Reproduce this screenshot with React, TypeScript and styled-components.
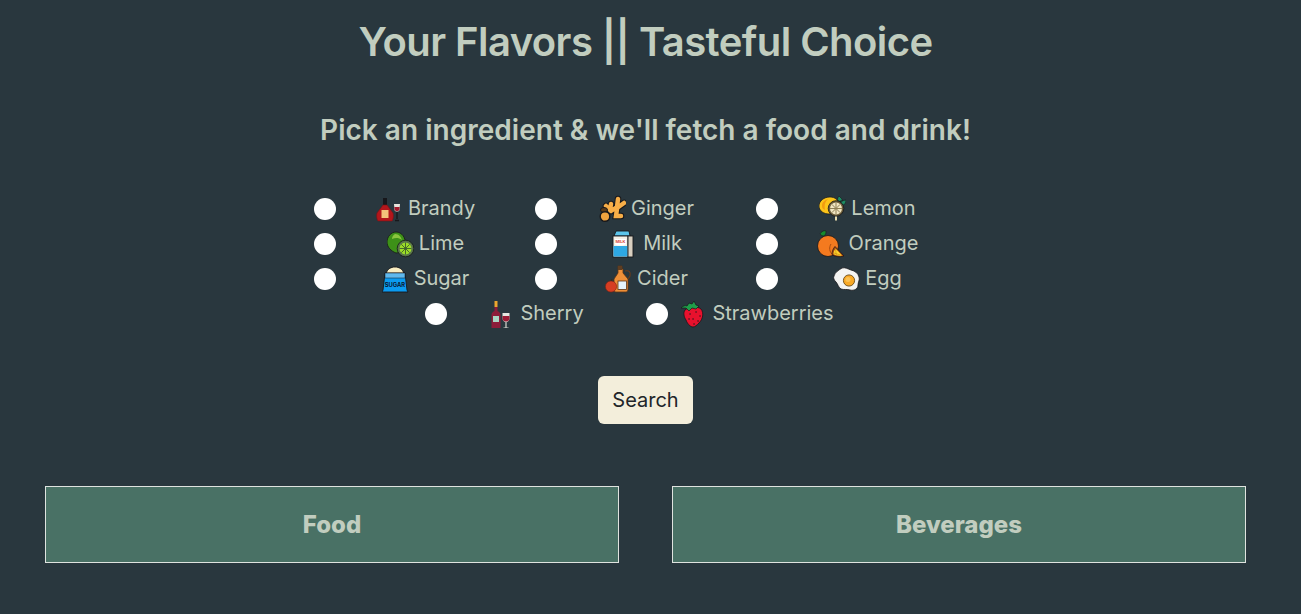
import React from 'react';
import styled, { createGlobalStyle } from 'styled-components';

const GlobalStyle = createGlobalStyle`
  html, body {
    margin: 0;
    background: #29373e;
  }
  body {
    font-family: Inter, "Liberation Sans", sans-serif;
    color: #c1cdbf;
  }
`;

const SPage = styled.main`
  box-sizing: border-box;
  width: 1301px;
  height: 614px;
  padding: 18px 10px 0 0;
  overflow: hidden;
`;

const STitle = styled.h1`
  margin: 0;
  font-size: 40px;
  line-height: 48px;
  font-weight: 600;
  letter-spacing: -0.57px;
  text-align: center;
`;

const SSubtitle = styled.h2`
  margin: 47px 0 0;
  font-size: 28px;
  line-height: 34px;
  font-weight: 600;
  letter-spacing: 0.02px;
  text-align: center;
`;

const SForm = styled.form`
  display: flex;
  flex-direction: column;
  align-items: center;
  margin-top: 44px;
`;

const SOptions = styled.div`
  display: flex;
  flex-wrap: wrap;
  justify-content: center;
  width: 663px;
`;

const SOption = styled.label`
  display: flex;
  align-items: center;
  width: 221px;
  height: 35px;
`;

const SRadio = styled.input`
  appearance: none;
  flex: none;
  width: 22px;
  height: 22px;
  margin: 0 14px 0 0;
  border-radius: 50%;
  background: #fff;
`;

const SLabel = styled.span`
  display: flex;
  align-items: center;
  justify-content: center;
  gap: 5px;
  width: 151px;
  font-size: 20px;
  line-height: 27px;
  white-space: nowrap;
`;

const SIcon = styled.svg`
  flex: none;
  width: 27px;
  height: 28px;
`;

const SButton = styled.button`
  width: 95px;
  height: 48px;
  margin-top: 45px;
  padding: 0;
  border: 0;
  border-radius: 6px;
  background: #f3eedb;
  color: #212529;
  font: 400 20px Inter, "Liberation Sans", sans-serif;
`;

const SCards = styled.section`
  display: flex;
  gap: 53px;
  margin: 62px 0 0 45px;
`;

const SCard = styled.div`
  box-sizing: border-box;
  display: flex;
  align-items: center;
  justify-content: center;
  width: 574px;
  height: 77px;
  border: 1px solid #dfe3df;
  background: #497165;
  font-size: 24px;
  font-weight: 800;
`;

const line = '#17171b';

const icons: Record<string, React.ReactNode> = {
  brandy: (
    <>
      <rect x="7" y="3" width="4" height="7" fill={line} />
      <path d="M7 10h4l6 8c1 3 0 7-1 8H2c-1-1-2-5-1-8z" fill="#b3161b" stroke="#7a1014" strokeWidth=".6" />
      <rect x="5.500" y="15" width="7" height="8" fill="#f4c27a" />
      <path d="M18 9h6l-.5 6c-.5 2-4.500 2-5 0z" fill="#e8e4dc" />
      <path d="M18.300 12h5.400l-.4 3c-.5 1.500-4 1.500-4.500 0z" fill="#a3192b" />
      <path d="M21 17v7M19 25.500h4" stroke={line} strokeWidth="1.300" />
    </>
  ),
  ginger: (
    <>
      <g fill="none" stroke={line} strokeLinecap="round" strokeWidth="6.500">
        <path d="M19 4l-1 8-6 4M12 9l-1 6M25 8l-7 5M7 11l5 5M18 14l-1 7 5 0" />
      </g>
      <g fill="none" stroke="#f7ae48" strokeLinecap="round" strokeWidth="4.500">
        <path d="M19 4l-1 8-6 4M12 9l-1 6M25 8l-7 5M7 11l5 5M18 14l-1 7 5 0" />
      </g>
      <ellipse cx="5" cy="15" rx="3.500" ry="2.500" fill="#5a3a16" stroke={line} />
      <circle cx="6" cy="21.500" r="4.800" fill="#efa23e" stroke={line} strokeWidth="1.400" />
    </>
  ),
  lemon: (
    <>
      <path d="M0 11C0 6 5 2 11 2c5 0 9 3 9 9 0 5-5 8-10 8-5 0-10-3-10-8z" fill="#fcc419" stroke={line} strokeWidth=".7" />
      <path d="M3 11C3 7 6 5 9 4 6 7 5 10 6 15c-2-1-3-2-3-4z" fill="#f29c11" />
      <path d="M19 6c-1-2 0-4 1-5l3 3 0 3z M21 6l6-1c0 3-1 5-4 5z" fill="#1e8a63" stroke={line} strokeWidth=".6" />
      <circle cx="17" cy="13.500" r="7.800" fill="#6b5d3b" stroke={line} strokeWidth=".8" />
      <circle cx="17" cy="13.500" r="6" fill="#f2e6c2" />
      <path d="M17 7.500v12M11 13.500h12M12.800 9.300l8.400 8.400M21.200 9.300l-8.400 8.400" stroke="#8f7f55" strokeWidth="1" />
      <path d="M17 21.500v4" stroke="#e8dcae" strokeWidth="2" />
    </>
  ),
  lime: (
    <>
      <path d="M9 2c6 0 10 6 9 12-1 5-5 9-9 9-5-2-9-6-9-11C0 7 4 2 9 2z" fill="#3d9118" stroke={line} strokeWidth=".8" />
      <path d="M8 4c4 0 6 3 7 6-4-3-7-2-10-1 0-2 1-4 3-5z" fill="#8bc63e" />
      <circle cx="18.500" cy="18.500" r="8.300" fill="#58754a" stroke={line} strokeWidth=".8" />
      <circle cx="18.500" cy="18.500" r="6" fill="#9bdc28" />
      <path d="M18.500 12.500v12M12.500 18.500h12M14.300 14.300l8.400 8.400M22.700 14.300l-8.400 8.400" stroke="#3d5c2a" strokeWidth=".9" />
    </>
  ),
  milk: (
    <>
      <path d="M3 6l2-5h13l1 5z" fill="#5cc4ea" stroke={line} strokeWidth=".9" />
      <rect x="2" y="6" width="15" height="21" fill="#f5f0e6" stroke={line} strokeWidth=".9" />
      <rect x="2.500" y="16" width="14" height="10.500" fill="#2ea8e4" />
      <rect x="17" y="6" width="5" height="21" fill="#d8cfc0" stroke={line} strokeWidth=".9" />
      <path d="M4 9h11v5c-2 2-9 2-11 0z" fill="#fff" />
      <text x="9.500" y="13" fontFamily="Inter, sans-serif" fontSize="4" fontWeight="700" fill="#d9433b" textAnchor="middle">MILK</text>
    </>
  ),
  orange: (
    <>
      <circle cx="11" cy="16" r="10.500" fill="#f47a1f" stroke={line} strokeWidth=".8" />
      <path d="M7 6C5 6 4 5 3 4c1-2 4-4 6-3 0 2 0 3-2 5z" fill="#15892e" stroke={line} strokeWidth=".6" />
      <path d="M14 14c-2 3-2 8 2 11" fill="none" stroke="#a84c10" strokeWidth="1" />
      <path d="M18 16.500l9 9.500c-4 1.500-10 .5-12-1.500 0-3 1-6 3-8z" fill="#a8480f" stroke={line} strokeWidth=".7" />
      <path d="M18.500 18.500l6.500 7c-3 .5-7 0-8.500-1.500 0-2 1-4 2-5.500z" fill="#ffd52e" />
      <path d="M18.500 19l.8 6M17 23l6.500 2" stroke="#c98e14" strokeWidth=".7" />
    </>
  ),
  sugar: (
    <>
      <path d="M4 9C5 4 9 2 13 2s8 2 9 7z" fill="#f8edc1" stroke={line} strokeWidth=".9" />
      <path d="M3 8h20l2 17 1 2H0l1-2z" fill="#0b9bf0" stroke={line} strokeWidth=".9" />
      <rect x="3" y="8" width="20" height="5" fill="#5fb9ee" stroke={line} strokeWidth=".5" />
      <text x="13" y="21.500" fontFamily="Inter, sans-serif" fontSize="5.800" fontWeight="700" fill="#0a1730" textAnchor="middle">SUGAR</text>
    </>
  ),
  cider: (
    <>
      <path d="M13 1h4v3h1v4l5 6v10c0 2-1 3-2 3H11c-2 0-2-1-2-3V14l4-6V4z" fill="#ee8f38" stroke="#5a3415" strokeWidth=".8" />
      <path d="M20 6c4-1 6 1 5 5l-2 3" fill="none" stroke="#6b3c1a" strokeWidth="1.200" />
      <path d="M13 1h4v4h-4z" fill="#5f3d20" />
      <rect x="13" y="16" width="8.500" height="8.500" fill="#e4f2fb" stroke="#5a3415" strokeWidth=".8" />
      <circle cx="6" cy="21.500" r="5.600" fill="#d63d22" stroke="#7b2413" strokeWidth=".6" />
      <path d="M6 16l1-2" stroke="#3e2a12" strokeWidth="1" />
    </>
  ),
  egg: (
    <>
      <path d="M9 3c3-1 6 1 9 2 4 1 7 3 8 7 1 3-1 5-1 8 0 4-4 6-8 5-3-1-6 0-9-1-3-2-3-5-5-7-2-2-3-4-2-6 1-4 5-6 8-8z" fill="#f4f4f2" stroke={line} strokeWidth=".8" />
      <circle cx="16" cy="15.500" r="5.600" fill="#f9a925" stroke="#6b4a14" strokeWidth=".9" />
      <circle cx="15" cy="14.500" r="2.500" fill="#fbc254" />
    </>
  ),
  sherry: (
    <>
      <rect x="6.500" y="1" width="3" height="6" fill="#eca62e" />
      <path d="M6.500 7h3v4c2 1 3 2 3 4v13H3.500V15c0-2 1-3 3-4z" fill="#8c1c3a" />
      <rect x="5" y="16" width="6" height="6" fill="#a9d5c4" />
      <path d="M14.500 13h7v5c0 2-1 4-3.500 4s-3.500-2-3.500-4z" fill="#e6e6e0" />
      <path d="M14.500 16h7v2c0 2-1 3.500-3.500 3.500s-3.500-1.500-3.500-3.500z" fill="#9c1b35" />
      <path d="M18 22v6M15.500 28h5" stroke="#d8d8d0" strokeWidth="1.200" />
    </>
  ),
  strawberry: (
    <>
      <path d="M5 10c3-3 13-4 16-1 3 4 2 10-2 14-2 2-4 4-6 4-3 0-6-4-7-7-2-3-3-7-1-10z" fill="#e8112d" stroke={line} strokeWidth=".8" />
      <path d="M10 14h.1M16 12h.1M20 16h.1M13 19h.1M18 21h.1M9 19h.1M14 24h.1" stroke={line} strokeWidth="1.300" strokeLinecap="round" />
      <path d="M1 8c2-2 4-3 6-2l2-3 3 1 2-3 2 4 3 1-3 3-4-1-3 3-3-3c-2 0-3 0-5 0z" fill="#1f9e4a" stroke={line} strokeWidth=".7" />
    </>
  ),
};

const options = [
  { name: 'Brandy', icon: 'brandy' },
  { name: 'Ginger', icon: 'ginger' },
  { name: 'Lemon', icon: 'lemon' },
  { name: 'Lime', icon: 'lime' },
  { name: 'Milk', icon: 'milk' },
  { name: 'Orange', icon: 'orange' },
  { name: 'Sugar', icon: 'sugar' },
  { name: 'Cider', icon: 'cider' },
  { name: 'Egg', icon: 'egg' },
  { name: 'Sherry', icon: 'sherry' },
  { name: 'Strawberries', icon: 'strawberry' },
];

const App = () => {
  return (
    <SPage>
      <GlobalStyle />
      <STitle>Your Flavors || Tasteful Choice</STitle>
      <SSubtitle>Pick an ingredient &amp; we'll fetch a food and drink!</SSubtitle>
      <SForm onSubmit={(e) => e.preventDefault()}>
        <SOptions>
          {options.map((option) => (
            <SOption key={option.name}>
              <SRadio type="radio" name="ingredient" />
              <SLabel>
                <SIcon viewBox="0 0 27 28">{icons[option.icon]}</SIcon>
                {option.name}
              </SLabel>
            </SOption>
          ))}
        </SOptions>
        <SButton type="submit">Search</SButton>
      </SForm>
      <SCards>
        <SCard>Food</SCard>
        <SCard>Beverages</SCard>
      </SCards>
    </SPage>
  );
};

export default App;
